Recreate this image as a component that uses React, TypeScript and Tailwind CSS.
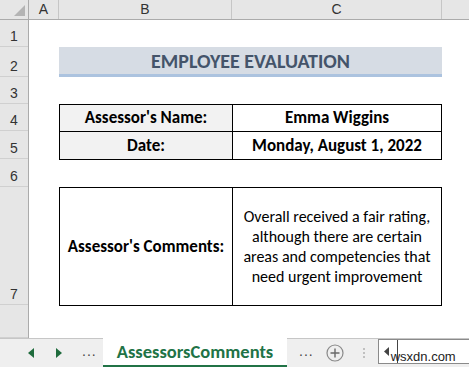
const rows = [
  { label: "1", h: "h-[27px]" },
  { label: "2", h: "h-[30px]" },
  { label: "3", h: "h-[27px]" },
  { label: "4", h: "h-[27px]" },
  { label: "5", h: "h-[28px]" },
  { label: "6", h: "h-[28px]" },
  { label: "7", h: "h-[118px]" },
  { label: "", h: "h-[33px]" },
];

const cell = "font-['Carlito','Lato',sans-serif]";

function Triangle({ dir }: { dir: "left" | "right" }) {
  return (
    <svg width="6" height="10" viewBox="0 0 6 10">
      <path d={dir === "left" ? "M6 0 L0 5 L6 10 Z" : "M0 0 L6 5 L0 10 Z"} fill="#1e6b3c" />
    </svg>
  );
}

export default function App() {
  return (
    <div className="w-[469px] h-[367px] overflow-hidden bg-white flex flex-col font-['Liberation_Sans',Arial,sans-serif] text-[#333]">
      {/* Column headers */}
      <div className="flex h-[20px] bg-[#e6e6e6] border-b border-[#ababab] text-[14px]">
        <div className="w-[29px] border-r border-[#ababab] relative">
          <svg className="absolute right-[3px] bottom-[3px]" width="11" height="11" viewBox="0 0 11 11">
            <path d="M11 0 L11 11 L0 11 Z" fill="#b4b4b4" />
          </svg>
        </div>
        <div className="w-[30px] border-r border-[#c6c6c6] flex items-center justify-center">A</div>
        <div className="w-[173px] border-r border-[#c6c6c6] flex items-center justify-center">B</div>
        <div className="w-[210px] border-r border-[#c6c6c6] flex items-center justify-center">C</div>
        <div className="flex-1" />
      </div>

      <div className="flex flex-1 min-h-0">
        {/* Row headers */}
        <div className="w-[29px] bg-[#e6e6e6] border-r border-[#ababab] flex flex-col text-[14px]">
          {rows.map((r, i) => (
            <div
              key={i}
              className={`${r.h} border-b border-[#d0d0d0] flex items-end justify-center pb-[1px] leading-[18px]`}
            >
              {r.label}
            </div>
          ))}
        </div>

        {/* Sheet */}
        <div className={`flex-1 flex flex-col text-black ${cell}`}>
          <div className="h-[27px]" />
          <div className="h-[30px] ml-[30px] w-[383px] bg-[#d6dce4] border-b-[3px] border-[#acc3df] flex items-center justify-center pt-[1px]">
            <span className="text-[20px] font-bold text-[#44546a]">EMPLOYEE EVALUATION</span>
          </div>
          <div className="h-[27px]" />
          <div className="ml-[30px] w-[383px] border border-black flex flex-col text-[17px] font-bold">
            <div className="flex h-[27px] border-b border-black">
              <div className="w-[173px] bg-[#f2f2f2] border-r border-black flex items-center justify-center">
                Assessor's Name:
              </div>
              <div className="flex-1 flex items-center justify-center">Emma Wiggins</div>
            </div>
            <div className="flex h-[27px]">
              <div className="w-[173px] bg-[#f2f2f2] border-r border-black flex items-center justify-center">
                Date:
              </div>
              <div className="flex-1 flex items-center justify-center">Monday, August 1, 2022</div>
            </div>
          </div>
          <div className="h-[27px]" />
          <div className="ml-[30px] w-[383px] h-[119px] border border-black flex">
            <div className="w-[173px] border-r border-black flex items-center justify-center font-bold text-[17px]">
              Assessor's Comments:
            </div>
            <div className="flex-1 flex items-center justify-center text-center leading-[20px] text-[16px]">
              <p>
                Overall received a fair rating,
                <br />
                although there are certain
                <br />
                areas and competencies that
                <br />
                need urgent improvement
              </p>
            </div>
          </div>
        </div>
      </div>

      {/* Sheet tabs */}
      <div className="h-[29px] flex bg-[#efefef]">
        <div className="w-[103px] shrink-0 border-t border-[#c6c6c6] flex items-center">
          <div className="ml-[28px]">
            <Triangle dir="left" />
          </div>
          <div className="ml-[22px]">
            <Triangle dir="right" />
          </div>
          <span className="ml-[20px] text-[#444] text-[14px] tracking-[1px] leading-none pb-[4px]">...</span>
        </div>
        <div className="w-[184px] shrink-0 bg-white border-b-[2px] border-[#217346] flex items-center justify-center">
          <span className={`${cell} font-bold text-[#217346] text-[18.5px]`}>AssessorsComments</span>
        </div>
        <div className="flex-1 min-w-0 overflow-hidden border-t border-[#c6c6c6] flex items-center">
          <span className="ml-[12px] shrink-0 text-[#444] text-[14px] tracking-[1px] leading-none pb-[4px]">...</span>
          <svg className="ml-[12px] shrink-0" width="18" height="18" viewBox="0 0 18 18">
            <circle cx="9" cy="9" r="8" fill="none" stroke="#8a8a8a" strokeWidth="1.2" />
            <path d="M9 4.5 V13.5 M4.5 9 H13.5" stroke="#6a6a6a" strokeWidth="1.4" />
          </svg>
          <div className="ml-[19px] shrink-0 flex flex-col gap-[2px]">
            <div className="w-[2px] h-[2px] bg-[#c0c0c0]" />
            <div className="w-[2px] h-[2px] bg-[#c0c0c0]" />
            <div className="w-[2px] h-[2px] bg-[#c0c0c0]" />
          </div>
          <div className="ml-[13px] w-[100px] shrink-0 h-[25px] self-start bg-white border border-[#8a8a8a] flex items-center">
            <svg className="ml-[5px] shrink-0" width="5" height="9" viewBox="0 0 5 9">
              <path d="M5 0 L0 4.5 L5 9 Z" fill="#444" />
            </svg>
            <div className="ml-[8px] shrink-0 w-[1px] h-[23px] bg-[#444]" />
            <span className="text-[13px] text-[#222] leading-none mt-[9px] -ml-[7px] whitespace-nowrap">wsxdn.com</span>
          </div>
        </div>
      </div>
    </div>
  );
}
